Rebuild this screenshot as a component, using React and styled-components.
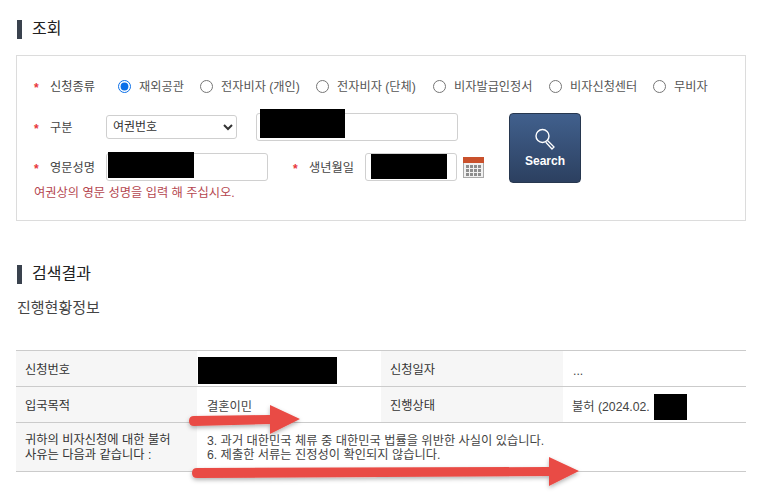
import styled, { createGlobalStyle } from "styled-components";

const GlobalStyle = createGlobalStyle`
    html, body {
        margin: 0;
        padding: 0;
        background: #fff;
    }
    body {
        font-family: "Liberation Sans", "Noto Sans CJK KR", sans-serif;
        color: #333;
        font-size: 12px;
    }
`;

const Page = styled.div`
    position: relative;
    width: 772px;
    height: 504px;
    overflow: hidden;
    padding: 20px 26px 0 16px;
    box-sizing: border-box;
`;

const Heading = styled.h2`
    display: flex;
    align-items: flex-start;
    gap: 10px;
    height: 19px;
    margin: ${(props) => props.$margin || "0"};
    padding-left: 1px;
    font-size: 16px;
    line-height: 17px;
    font-weight: 400;
    color: #222;
    &::before {
        content: "";
        width: 5px;
        height: 19px;
        background: #3a424e;
    }
`;

const Panel = styled.section`
    position: relative;
    height: 166px;
    margin-top: 16px;
    border: 1px solid #dcdcdc;
    box-sizing: border-box;
    padding: 20px 0 0 17px;
`;

const RadioRow = styled.div`
    display: flex;
    align-items: center;
    height: 20px;
`;

const FormArea = styled.div`
    display: flex;
    margin-top: 17px;
`;

const Fields = styled.div`
    display: flex;
    flex-direction: column;
    width: 475px;
`;

const FieldRow = styled.div`
    display: flex;
    align-items: center;
    height: 28px;
    margin-bottom: ${(props) => props.$gap || 0}px;
`;

const Label = styled.span`
    display: flex;
    align-items: center;
    width: ${(props) => props.$width}px;
    margin-left: ${(props) => props.$left || 0}px;
    flex: none;
    font-size: 12.2px;
    color: #444;
    &::before {
        content: "*";
        width: 16px;
        margin-top: 3px;
        color: #e8363c;
        font-size: 12px;
        font-weight: 700;
    }
`;

const RadioOption = styled.label`
    display: flex;
    align-items: center;
    gap: 8px;
    width: ${(props) => props.$width}px;
    flex: none;
    font-size: 12.2px;
    color: #555;
`;

const RadioInput = styled.input`
    width: 13px;
    height: 13px;
    margin: 0;
    flex: none;
    accent-color: #0a6fe8;
`;

const Select = styled.select`
    width: 131px;
    height: 24px;
    flex: none;
    border: 1px solid #cfcfcf;
    border-radius: 3px;
    background: #fff;
    padding-left: 2px;
    font-family: inherit;
    font-size: 12px;
    color: #333;
`;

const TextInput = styled.input`
    width: ${(props) => props.$width}px;
    height: 28px;
    margin-left: ${(props) => props.$left || 0}px;
    flex: none;
    box-sizing: border-box;
    border: 1px solid #d0d0d0;
    border-radius: 3px;
    background: #fff;
`;

const CalendarIcon = styled.svg`
    width: 21px;
    height: 21px;
    margin-left: 6px;
    flex: none;
`;

const Note = styled.p`
    margin: 4px 0 0;
    font-size: 12.25px;
    color: #b5474f;
    line-height: 16px;
`;

const SearchButton = styled.button`
    display: flex;
    flex-direction: column;
    align-items: center;
    justify-content: center;
    gap: 3px;
    width: 72px;
    height: 70px;
    padding: 0 0 2px;
    border: 1px solid #27374f;
    border-radius: 4px;
    background: linear-gradient(#41608d, #2c4060);
    color: #fff;
    font-family: "Liberation Sans", sans-serif;
    font-size: 12px;
    font-weight: 700;
`;

const Redaction = styled.div`
    position: absolute;
    left: ${(props) => props.$x}px;
    top: ${(props) => props.$y}px;
    width: ${(props) => props.$w}px;
    height: ${(props) => props.$h}px;
    background: #000;
`;

const SubTitle = styled.div`
    margin-top: 14px;
    padding-left: 1px;
    font-size: 15px;
    line-height: 20px;
    color: #444;
`;

const Table = styled.table`
    width: 730px;
    margin-top: 32px;
    border-collapse: collapse;
    table-layout: fixed;
    border-top: 1px solid #cbcbcb;
`;

const Row = styled.tr`
    height: ${(props) => props.$height}px;
    border-bottom: 1px solid #cbcbcb;
    & > th,
    & > td {
        padding-top: ${(props) => props.$top}px;
    }
`;

const HeadCell = styled.th`
    padding: 0 0 0 9px;
    background: #f6f6f6;
    font-size: 12.25px;
    font-weight: 400;
    line-height: 15px;
    color: #333;
    text-align: left;
`;

const Cell = styled.td`
    padding: 0 0 0 ${(props) => props.$pad || 10}px;
    font-size: 12.25px;
    line-height: 14px;
    color: #444;
`;

const ArrowLayer = styled.svg`
    position: absolute;
    left: 0;
    top: 0;
    width: 772px;
    height: 504px;
    pointer-events: none;
`;

function Calendar() {
    const cells = [];
    for (let row = 0; row < 3; row++) {
        for (let col = 0; col < 4; col++) {
            cells.push(
                <rect
                    key={`${row}-${col}`}
                    x={3 + col * 4}
                    y={8 + row * 4}
                    width="3"
                    height="3"
                    fill="#8d8d8d"
                />
            );
        }
    }
    return (
        <CalendarIcon viewBox="0 0 21 21">
            <rect x="0.5" y="0.5" width="20" height="20" fill="#f1f1f1" stroke="#a9a9a9" />
            <rect x="0" y="0" width="21" height="6" fill="#c9512c" />
            {cells}
        </CalendarIcon>
    );
}

const radios = [
    { label: "재외공관", width: 82, checked: true },
    { label: "전자비자 (개인)", width: 116 },
    { label: "전자비자 (단체)", width: 117 },
    { label: "비자발급인정서", width: 116 },
    { label: "비자신청센터", width: 104 },
    { label: "무비자", width: 70 },
];

function App() {
    return (
        <>
            <GlobalStyle />
            <Page>
                <Heading>조회</Heading>
                <Panel>
                    <RadioRow>
                        <Label $width={84}>신청종류</Label>
                        {radios.map((radio) => (
                            <RadioOption key={radio.label} $width={radio.width}>
                                <RadioInput
                                    type="radio"
                                    name="kind"
                                    defaultChecked={radio.checked}
                                />
                                {radio.label}
                            </RadioOption>
                        ))}
                    </RadioRow>
                    <FormArea>
                        <Fields>
                            <FieldRow $gap={12}>
                                <Label $width={72}>구분</Label>
                                <Select defaultValue="passport">
                                    <option value="passport">여권번호</option>
                                </Select>
                                <TextInput $width={202} $left={19} />
                            </FieldRow>
                            <FieldRow>
                                <Label $width={72}>영문성명</Label>
                                <TextInput $width={162} />
                                <Label $width={70} $left={25}>
                                    생년월일
                                </Label>
                                <TextInput $width={92} $left={2} />
                                <Calendar />
                            </FieldRow>
                            <Note>여권상의 영문 성명을 입력 해 주십시오.</Note>
                        </Fields>
                        <SearchButton type="button">
                            <svg width="24" height="24" viewBox="0 0 24 24" fill="none">
                                <circle cx="9.5" cy="9" r="6.5" stroke="#fff" strokeWidth="1.4" />
                                <path
                                    d="M14.5 13.5 L21 20 L19 22 L12.8 15.2"
                                    stroke="#fff"
                                    strokeWidth="1.3"
                                />
                            </svg>
                            Search
                        </SearchButton>
                    </FormArea>
                    <Redaction $x={243} $y={53} $w={85} $h={29} />
                    <Redaction $x={91} $y={96} $w={86} $h={26} />
                    <Redaction $x={354} $y={98} $w={76} $h={25} />
                </Panel>
                <Heading $margin="44px 0 0">검색결과</Heading>
                <SubTitle>진행현황정보</SubTitle>
                <Table>
                    <colgroup>
                        <col width="181" />
                        <col width="184" />
                        <col width="182" />
                        <col width="183" />
                    </colgroup>
                    <tbody>
                        <Row $height={36} $top={4}>
                            <HeadCell>신청번호</HeadCell>
                            <Cell />
                            <HeadCell>신청일자</HeadCell>
                            <Cell>...</Cell>
                        </Row>
                        <Row $height={36} $top={4}>
                            <HeadCell>입국목적</HeadCell>
                            <Cell>결혼이민</Cell>
                            <HeadCell>진행상태</HeadCell>
                            <Cell $pad={9}>불허 (2024.02.</Cell>
                        </Row>
                        <Row $height={49} $top={2}>
                            <HeadCell>
                                귀하의 비자신청에 대한 불허
                                <br />
                                사유는 다음과 같습니다 :
                            </HeadCell>
                            <Cell colSpan={3}>
                                3. 과거 대한민국 체류 중 대한민국 법률을 위반한 사실이 있습니다.
                                <br />
                                6. 제출한 서류는 진정성이 확인되지 않습니다.
                            </Cell>
                        </Row>
                    </tbody>
                </Table>
                <Redaction $x={198} $y={357} $w={139} $h={27} />
                <Redaction $x={654} $y={394} $w={33} $h={26} />
                <ArrowLayer viewBox="0 0 772 504">
                    <defs>
                        <filter id="arrowShadow" x="-10%" y="-30%" width="120%" height="170%">
                            <feDropShadow dx="0" dy="2" stdDeviation="2" floodColor="#000" floodOpacity="0.3" />
                        </filter>
                    </defs>
                    <g fill="#e94b45" filter="url(#arrowShadow)">
                        <path d="M194 416 L270 415 L270 405 L300 419 L270 434 L270 424 L194 426 Q189 426 189 421 Q189 416 194 416 Z" />
                        <path d="M197 468 L549 467 L549 457 L579 471 L549 486 L549 476 L197 478 Q192 478 192 473 Q192 468 197 468 Z" />
                    </g>
                </ArrowLayer>
            </Page>
        </>
    );
}

export default App;
